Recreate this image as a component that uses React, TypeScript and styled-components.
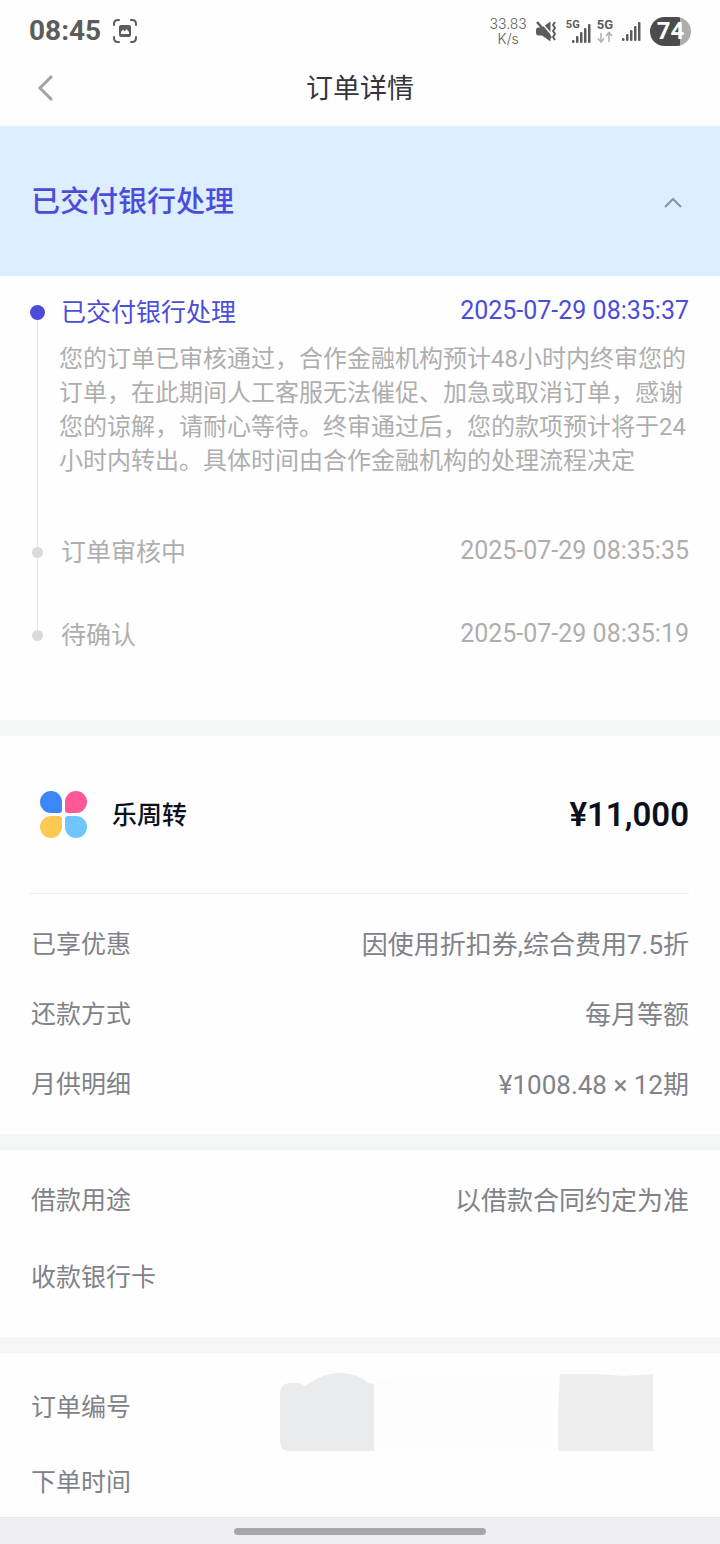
import React, { useState } from "react";
import styled, { createGlobalStyle } from "styled-components";

const GlobalStyle = createGlobalStyle`
  *, *::before, *::after { box-sizing: border-box; }
  body {
    margin: 0;
    background: #fefefe;
    font-family: Roboto, "Noto Sans CJK SC", sans-serif;
  }
  h1, h2, p, ol, dl, dd, dt { margin: 0; padding: 0; font-weight: 400; }
  ol { list-style: none; }
  button { font: inherit; border: 0; padding: 0; background: none; cursor: pointer; }
  svg { display: block; flex: none; }
`;

const Page = styled.div`
  display: flex;
  flex-direction: column;
  min-height: 100vh;
`;

const StatusBar = styled.header`
  display: flex;
  align-items: center;
  height: 62px;
  padding: 0 29px;
  color: #5c5c5c;
`;

const Clock = styled.time`
  margin-right: 12px;
  font-size: 28px;
  font-weight: 700;
  line-height: 32px;
`;

const StatusIcons = styled.div`
  display: flex;
  align-items: center;
  gap: 9px;
  margin-left: auto;
`;

const NetSpeed = styled.span`
  font-family: Inter, sans-serif;
  font-size: 14px;
  font-weight: 300;
  line-height: 15px;
  text-align: center;
`;

const Network = styled.span`
  display: flex;
  align-items: flex-end;
  gap: 6px;
`;

const NetworkLabel = styled.span<{ $large?: boolean }>`
  display: flex;
  flex-direction: column;
  align-items: center;
  align-self: flex-start;
  font-size: ${(p) => (p.$large ? 13 : 11)}px;
  font-weight: 700;
  line-height: 12px;
`;

const SignalWrap = styled.span`
  margin-left: -14px;
  padding-top: 4px;
`;

const Battery = styled.span`
  display: flex;
  align-items: center;
  justify-content: center;
  width: 41px;
  height: 29px;
  border-radius: 15px;
  background: linear-gradient(90deg, #4b4b4b 74%, #adadad 74%);
  color: #fff;
  font-size: 24px;
  font-weight: 700;
  line-height: 29px;
`;

const TitleBar = styled.div`
  display: grid;
  grid-template-columns: 1fr auto 1fr;
  align-items: center;
  height: 64px;
  padding: 0 31px 12px;
`;

const BackButton = styled.button`
  justify-self: start;
  padding: 8px 6px;
`;

const PageTitle = styled.h1`
  padding-top: 2px;
  color: #33343c;
  font-size: 27px;
  line-height: 40px;
`;

const Banner = styled.button`
  display: flex;
  align-items: center;
  justify-content: space-between;
  width: 100%;
  height: 150px;
  padding: 2px 38px 0 31px;
  background: #dceeff;
  color: #4b4dd8;
  font-size: 29px;
  font-weight: 500;
  line-height: 40px;
`;

const Timeline = styled.ol`
  padding: 17px 31px 68px 30px;
`;

const Step = styled.li<{ $active?: boolean }>`
  display: flex;
  gap: 14px;
  color: ${(p) => (p.$active ? "#4b4dd8" : "#aeaeae")};
`;

const Marker = styled.div`
  display: flex;
  flex: none;
  flex-direction: column;
  align-items: center;
  width: 15px;
`;

const Stub = styled.i<{ $first?: boolean }>`
  width: 1px;
  height: ${(p) => (p.$first ? 12 : 14)}px;
  background: ${(p) => (p.$first ? "transparent" : "#e4e4e4")};
`;

const Rail = styled.i`
  flex: 1;
  width: 1px;
  background: #e4e4e4;
`;

const Dot = styled.i<{ $active?: boolean }>`
  width: ${(p) => (p.$active ? 15 : 11)}px;
  height: ${(p) => (p.$active ? 15 : 11)}px;
  border-radius: 50%;
  background: ${(p) => (p.$active ? "#4b4dd8" : "#dadada")};
`;

const StepBody = styled.div<{ $last?: boolean }>`
  flex: 1;
  min-width: 0;
  padding-bottom: ${(p) => (p.$last ? 0 : 47)}px;
`;

const StepHead = styled.div`
  display: flex;
  align-items: center;
  justify-content: space-between;
  height: 36px;
  padding-left: 2px;
  font-size: 25px;
  line-height: 36px;
`;

const StepName = styled.span`
  padding-top: 3px;
`;

const StepNote = styled.p`
  padding: 13px 0 8px;
  color: #aeaeae;
  font-size: 24px;
  line-height: 34px;
`;

const Section = styled.section<{ $tint: string }>`
  position: relative;
  padding: 0 31px 0 30px;
  border-top: 16px solid ${(p) => p.$tint};
`;

const ProductHead = styled.div`
  display: flex;
  align-items: center;
  gap: 24px;
  height: 158px;
  padding-left: 10px;
  border-bottom: 1px solid #ebebeb;
  color: #0b101c;
`;

const ProductName = styled.h2`
  padding-top: 2px;
  font-size: 25px;
  font-weight: 500;
  line-height: 36px;
`;

const Amount = styled.strong`
  margin-left: auto;
  font-size: 33px;
  font-weight: 600;
  line-height: 40px;
`;

const Details = styled.dl<{ $top: number; $gap: number; $bottom: number }>`
  display: flex;
  flex-direction: column;
  gap: ${(p) => p.$gap}px;
  padding: ${(p) => p.$top}px 0 ${(p) => p.$bottom}px 1px;
`;

const Row = styled.div`
  display: flex;
  align-items: center;
  justify-content: space-between;
  height: 36px;
  color: #818288;
  font-size: 25px;
  line-height: 36px;
`;

const Value = styled.dd`
  font-size: 26px;
`;

const Smudge = styled.div`
  position: absolute;
  top: 19px;
  right: 65px;
`;

const NavBar = styled.footer`
  display: flex;
  align-items: center;
  justify-content: center;
  height: 27px;
  margin-top: auto;
  border-top: 1px solid #e6e6e8;
  background: #efeff1;
`;

const NavHandle = styled.i`
  width: 35%;
  height: 7px;
  border-radius: 4px;
  background: #a7a7a9;
`;

const CaptureIcon = () => (
  <svg width="24" height="24" viewBox="0 0 24 24" fill="none" stroke="#5c5c5c" strokeWidth="2" strokeLinecap="round">
    <path d="M1 6V5Q1 1 5 1H6M18 1h1Q23 1 23 5V6M23 18v1Q23 23 19 23h-1M6 23H5Q1 23 1 19v-1" />
    <rect x="6" y="6" width="12" height="12" rx="2" fill="#5c5c5c" stroke="none" />
    <path d="M8 15V13L10 10.500L11.500 12.500L13.500 10L16 13V15Z" fill="#fff" stroke="none" />
  </svg>
);

const MuteIcon = () => (
  <svg width="21" height="21" viewBox="0 0 21 21" fill="none">
    <path d="M2 6.500h4l8.500-6v20l-8.500-6H2Q0 14 0 12V9Q0 6.500 2 6.500Z" fill="#5c5c5c" />
    <path d="M3 -1L17 15" stroke="#fefefe" strokeWidth="1.500" />
    <path d="M1 1L15 17" stroke="#5c5c5c" strokeWidth="2.500" />
    <path d="M19 1l-2 3l2 3l-2 3l2 3l-2 3l2 3" stroke="#5c5c5c" strokeWidth="2" strokeLinejoin="round" />
  </svg>
);

const SignalIcon = () => (
  <svg width="19" height="19" viewBox="0 0 19 19" fill="#5c5c5c">
    <rect x="0" y="16" width="2.500" height="3" rx="1" />
    <rect x="4" y="12" width="2.500" height="7" rx="1" />
    <rect x="8" y="8" width="2.500" height="11" rx="1" />
    <rect x="12" y="4" width="2.500" height="15" rx="1" />
    <rect x="16" y="0" width="2.500" height="19" rx="1" />
  </svg>
);

const TrafficIcon = () => (
  <svg width="16" height="12" viewBox="0 0 16 12" fill="none" stroke="#b0b0b0" strokeWidth="1.500">
    <path d="M4 2v9M1 7.500L4 11L7 7.500M12 11V2M9 5L12 1.500L15 5" />
  </svg>
);

const Logo = () => (
  <svg width="48" height="48" viewBox="0 0 48 48">
    <path d="M11 0A11 11 0 0 1 22 11V19Q22 22 19 22H11A11 11 0 0 1 11 0Z" fill="#3d86fa" />
    <path d="M36 0A11 11 0 0 1 36 22H28Q25 22 25 19V11A11 11 0 0 1 36 0Z" fill="#ff5797" />
    <path d="M11 25H19Q22 25 22 28V36A11 11 0 1 1 11 25Z" fill="#fdc955" />
    <path d="M28 25H36A11 11 0 1 1 25 36V28Q25 25 28 25Z" fill="#6fc5fc" />
  </svg>
);

const steps = [
  {
    name: "已交付银行处理",
    time: "2025-07-29 08:35:37",
    note: "您的订单已审核通过，合作金融机构预计48小时内终审您的订单，在此期间人工客服无法催促、加急或取消订单，感谢您的谅解，请耐心等待。终审通过后，您的款项预计将于24小时内转出。具体时间由合作金融机构的处理流程决定",
  },
  { name: "订单审核中", time: "2025-07-29 08:35:35" },
  { name: "待确认", time: "2025-07-29 08:35:19" },
];

type Item = { label: string; value?: string };

const loanItems: Item[] = [
  { label: "已享优惠", value: "因使用折扣券,综合费用7.5折" },
  { label: "还款方式", value: "每月等额" },
  { label: "月供明细", value: "¥1008.48 × 12期" },
];
const usageItems: Item[] = [{ label: "借款用途", value: "以借款合同约定为准" }, { label: "收款银行卡" }];
const orderItems: Item[] = [{ label: "订单编号" }, { label: "下单时间" }];

type DetailListProps = { items: Item[]; top: number; gap: number; bottom: number };

const DetailList = ({ items, top, gap, bottom }: DetailListProps) => (
  <Details $top={top} $gap={gap} $bottom={bottom}>
    {items.map((item) => (
      <Row key={item.label}>
        <dt>{item.label}</dt>
        <Value>{item.value}</Value>
      </Row>
    ))}
  </Details>
);

export default function App() {
  const [open, setOpen] = useState(true);
  return (
    <Page>
      <GlobalStyle />
      <StatusBar>
        <Clock>08:45</Clock>
        <CaptureIcon />
        <StatusIcons>
          <NetSpeed>
            33.83
            <br />
            K/s
          </NetSpeed>
          <MuteIcon />
          <Network>
            <NetworkLabel>5G</NetworkLabel>
            <SignalWrap>
              <SignalIcon />
            </SignalWrap>
            <NetworkLabel $large>
              5G
              <TrafficIcon />
            </NetworkLabel>
          </Network>
          <SignalIcon />
          <Battery>74</Battery>
        </StatusIcons>
      </StatusBar>
      <TitleBar>
        <BackButton aria-label="返回">
          <svg width="17" height="26" viewBox="0 0 17 26" fill="none" stroke="#a3a3aa" strokeWidth="3">
            <path d="M15 1L3 13L15 25" />
          </svg>
        </BackButton>
        <PageTitle>订单详情</PageTitle>
      </TitleBar>
      <main>
        <Banner aria-expanded={open} onClick={() => setOpen(!open)}>
          已交付银行处理
          <svg width="18" height="12" viewBox="0 0 18 12" fill="none" stroke="#8795a3" strokeWidth="2">
            <path d={open ? "M1 11L9 3L17 11" : "M1 3L9 11L17 3"} />
          </svg>
        </Banner>
        {open && (
          <Timeline>
            {steps.map((step, i) => (
              <Step key={step.name} $active={i === 0}>
                <Marker>
                  <Stub $first={i === 0} />
                  <Dot $active={i === 0} />
                  {i < steps.length - 1 && <Rail />}
                </Marker>
                <StepBody $last={i === steps.length - 1}>
                  <StepHead>
                    <StepName>{step.name}</StepName>
                    <time>{step.time}</time>
                  </StepHead>
                  {step.note && <StepNote>{step.note}</StepNote>}
                </StepBody>
              </Step>
            ))}
          </Timeline>
        )}
        <Section $tint="#f4f6f6">
          <ProductHead>
            <Logo />
            <ProductName>乐周转</ProductName>
            <Amount>¥11,000</Amount>
          </ProductHead>
          <DetailList items={loanItems} top={33} gap={34} bottom={31} />
        </Section>
        <Section $tint="#f4f6f6">
          <DetailList items={usageItems} top={33} gap={41} bottom={41} />
        </Section>
        <Section $tint="#f5f5f5">
          <DetailList items={orderItems} top={37} gap={39} bottom={16} />
          <Smudge>
            <svg width="376" height="80" viewBox="0 0 376 80">
              <path d="M95 8L270 2V78L95 79Z" fill="#fdfdfe" />
              <path d="M1 22Q1 11 12 11Q20 10 26 14Q43 1 61 1Q79 1 89 11L95 12V79H9Q1 79 1 68Z" fill="#eaebed" />
              <path d="M281 2L318 2L345 4L374 2L374 79H279V40Z" fill="#eeeeee" />
            </svg>
          </Smudge>
        </Section>
      </main>
      <NavBar>
        <NavHandle />
      </NavBar>
    </Page>
  );
}
